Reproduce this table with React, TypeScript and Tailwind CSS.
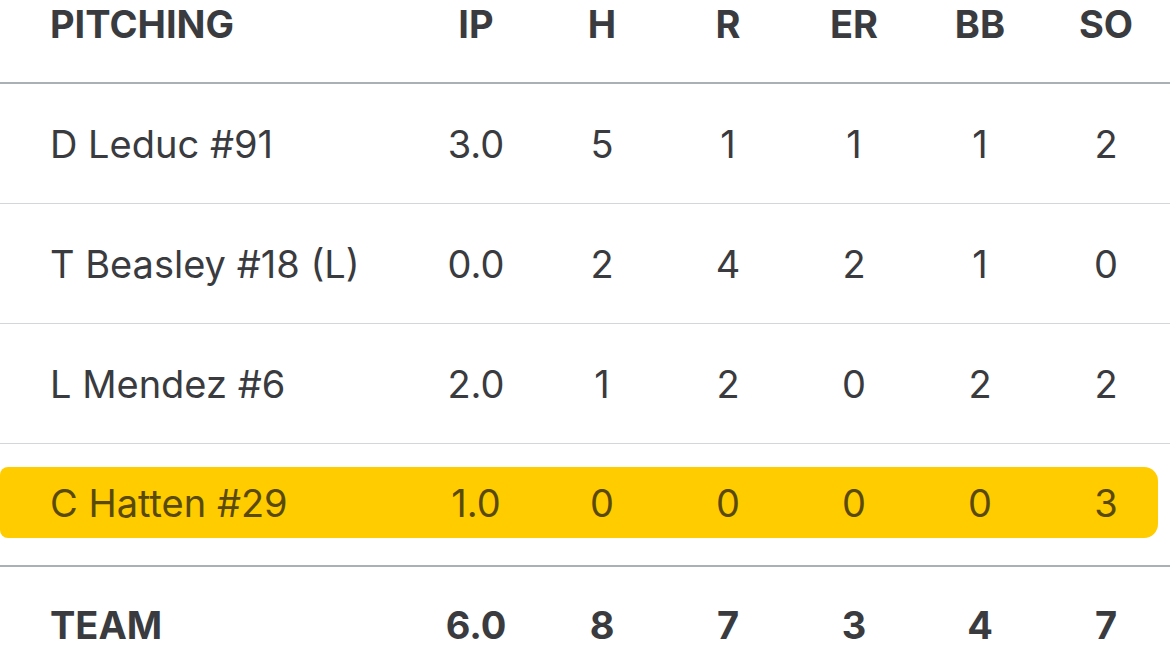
const cols = ["IP", "H", "R", "ER", "BB", "SO"];

const rows = [
  { name: "D Leduc #91", stats: ["3.0", "5", "1", "1", "1", "2"] },
  { name: "T Beasley #18 (L)", stats: ["0.0", "2", "4", "2", "1", "0"] },
  { name: "L Mendez #6", stats: ["2.0", "1", "2", "0", "2", "2"] },
];

const highlighted = { name: "C Hatten #29", stats: ["1.0", "0", "0", "0", "0", "3"] };
const team = ["6.0", "8", "7", "3", "4", "7"];

function Cells({ name, stats }: { name: string; stats: string[] }) {
  return (
    <>
      <div className="w-[413px] shrink-0 pl-[50px]">{name}</div>
      {stats.map((s, i) => (
        <div key={i} className="w-[126px] shrink-0 text-center">
          {s}
        </div>
      ))}
    </>
  );
}

export default function App() {
  return (
    <div
      className="w-[1170px] h-[658px] overflow-hidden bg-white text-[#3a3b3f] text-[38px] leading-[48px]"
      style={{ fontFamily: "Inter, 'Liberation Sans', sans-serif" }}
    >
      {/* header */}
      <div className="flex h-[84px] border-b-2 border-[#a9b1b6] font-bold">
        <Cells name="PITCHING" stats={cols} />
      </div>

      {rows.map((r) => (
        <div key={r.name} className="flex items-center h-[120px] border-b border-[#d3d7d9]">
          <Cells name={r.name} stats={r.stats} />
        </div>
      ))}

      {/* highlighted row */}
      <div className="h-[123px] pt-[23px] border-b-2 border-[#a9b1b6]">
        <div className="flex items-center w-[1158px] h-[71px] overflow-visible bg-[#ffcc00] rounded-l-[8px] rounded-r-[14px] text-[#5a4a0a]">
          <Cells name={highlighted.name} stats={highlighted.stats} />
        </div>
      </div>

      {/* team totals */}
      <div className="flex pt-[34px] font-bold">
        <Cells name="TEAM" stats={team} />
      </div>
    </div>
  );
}
